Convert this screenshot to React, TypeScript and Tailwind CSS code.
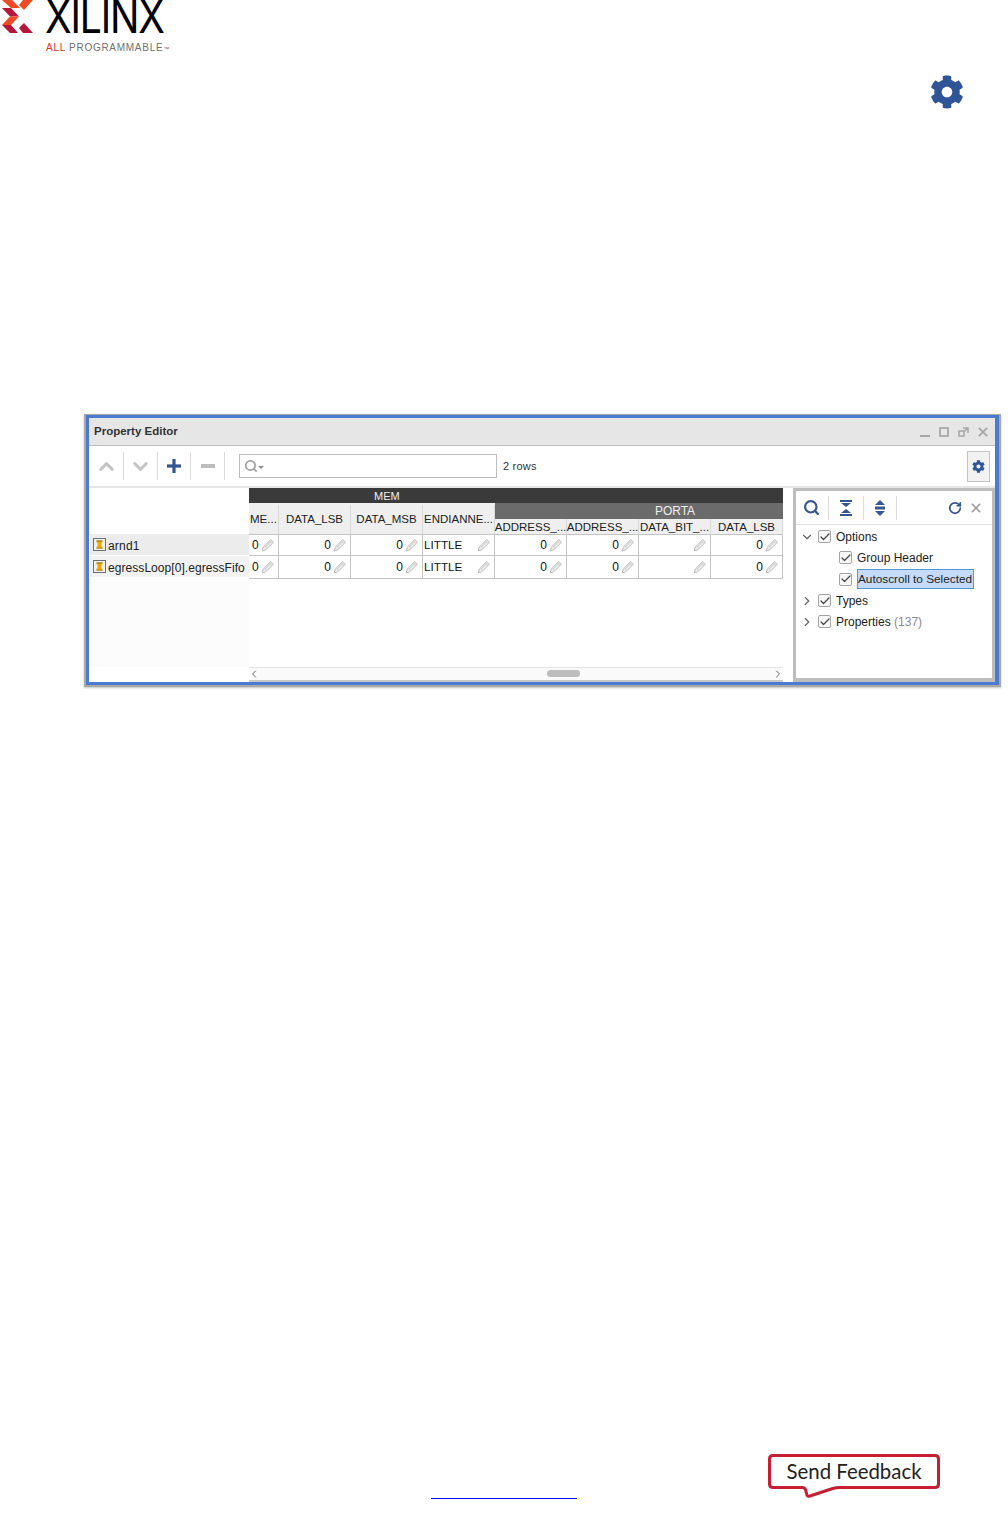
import { ChevronUp, ChevronDown, ChevronRight, ChevronLeft, Plus, Minus, Search, RotateCw, Check } from "lucide-react";
import { FaCog } from "react-icons/fa";

function Pencil() {
  return (
    <svg width="14" height="14" viewBox="0 0 14 14" className="shrink-0">
      <path d="M1.2 12.8 L2.2 9.2 L9.8 1.6 L12.4 4.2 L4.8 11.8 Z" fill="#f0f0f0" stroke="#b9b9b9" strokeWidth="1" />
      <path d="M3.4 8.2 L6 10.6 M8.6 2.8 L11.2 5.4 M4.4 9 L9.6 3.8" stroke="#cccccc" strokeWidth="1" fill="none" />
    </svg>
  );
}

function RowIcon() {
  return (
    <svg width="13" height="13" viewBox="0 0 13 13" className="shrink-0">
      <rect x="0.5" y="0.5" width="12" height="12" fill="#f0f0f0" stroke="#6f6f6f" />
      <path d="M3.5 2.5 H9.5 V4.5 H8.5 V8.5 H9.5 V10.5 H3.5 V8.5 H4.5 V4.5 H3.5 Z" fill="#eba90a" />
      <path d="M3.5 2.5 H9.5 V3.5 H3.5 Z M3.5 9.7 H9.5 V10.5 H3.5 Z" fill="#8f7420" />
    </svg>
  );
}

function CloseGlyph({ size, color, w }: { size: number; color: string; w: number }) {
  return (
    <svg width={size} height={size} viewBox="0 0 10 10" className="shrink-0">
      <path d="M0.8 0.8 L9.2 9.2 M9.2 0.8 L0.8 9.2" stroke={color} strokeWidth={w} fill="none" />
    </svg>
  );
}

function Box() {
  return (
    <span className="w-[13px] h-[13px] rounded-[2px] border border-[#a4a4a4] bg-[#f8f8f8] flex items-center justify-center shrink-0">
      <Check size={12} strokeWidth={2.4} color="#444444" className="shrink-0" />
    </span>
  );
}

function Cell({ v, left }: { v?: string; left?: boolean }) {
  return (
    <div className="flex items-center justify-end pr-[3px] border-r border-[#c4c4c4] min-w-0">
      {left ? (
        <span className="mr-auto pl-[1px] text-[11.7px] text-[#111111]">{v}</span>
      ) : (
        <span className="text-[12px] text-[#111111] mr-[2px]">{v}</span>
      )}
      <Pencil />
    </div>
  );
}

function Row({ h }: { h: string }) {
  return (
    <div className={`grid grid-cols-[30px_repeat(7,72px)] border-b border-[#c4c4c4] ${h}`}>
      <div className="flex items-center justify-between pl-[3px] pr-[3px] border-r border-[#c4c4c4]">
        <span className="text-[12px] text-[#111111]">0</span>
        <Pencil />
      </div>
      <Cell v="0" />
      <Cell v="0" />
      <Cell v="LITTLE" left />
      <Cell v="0" />
      <Cell v="0" />
      <Cell v="" />
      <Cell v="0" />
    </div>
  );
}

function HeadCell({ t }: { t: string }) {
  return (
    <div className="flex items-center justify-center border-r border-[#d8d8d8] whitespace-nowrap text-[11.5px] text-[#222222]">
      {t}
    </div>
  );
}

function Sep() {
  return <span className="w-px h-[24px] bg-[#dcdcdc] shrink-0" />;
}

function TreeRow({ children, indent }: { children: React.ReactNode; indent: string }) {
  return <div className={`flex items-center h-[21.3px] text-[12px] text-[#222222] ${indent}`}>{children}</div>;
}

export default function App() {
  return (
    <div className="w-[1008px] h-[1526px] bg-white flex flex-col overflow-hidden font-['Liberation_Sans',Arial,sans-serif]">
      {/* Logo */}
      <div className="flex h-[52px] shrink-0 pl-[1px]">
        <svg width="33" height="34" viewBox="0 0 33 34" className="shrink-0">
          <polygon points="1,0 11,0 19,8 10,8 " fill="#ee4a23" />
          <polygon points="1,8 10,8 18,16.5 9,16.5" fill="#b5173a" />
          <polygon points="9,16.5 18,16.5 10,25 1,25" fill="#ee4a23" />
          <polygon points="1,25 10,25 17,33 9,33 6,30" fill="#b5173a" />
          <polygon points="22,0 32,0 23,10 18,5" fill="#ee4a23" />
          <polygon points="18,28 23,23 32,33 22,33" fill="#b5173a" />
        </svg>
        <div className="ml-[11px] flex flex-col">
          <span className="font-['Inter'] font-normal text-[46px] leading-[33px] h-[33px] text-black tracking-[-1.4px] origin-left scale-x-[0.85]">XILINX</span>
          <span className="mt-[10px] ml-[1px] text-[10px] leading-[10px] tracking-[0.72px] text-[#6f6f6f] whitespace-nowrap">
            <span className="text-[#e0301e]">ALL</span> PROGRAMMABLE<span className="text-[6px]">™</span>
          </span>
        </div>
      </div>

      {/* Gear */}
      <div className="mt-[23px] pl-[930px] h-[33px] shrink-0">
        <FaCog size={34} color="#2f5597" />
      </div>

      {/* Property Editor window */}
      <div className="mt-[306px] ml-[84px] w-[917px] h-[273px] shrink-0 border border-[#a8a8a8] border-l-2 border-b-2 border-r-2 bg-white shadow-[0_1px_2px_rgba(0,0,0,0.25)]">
        <div className="h-full border-[3px] border-r-4 border-[#4a7bd0] flex flex-col">
          {/* Title */}
          <div className="h-[28px] shrink-0 bg-[#e6e6e6] border-b border-[#bdbdbd] flex items-center pl-[5px]">
            <span className="text-[11.5px] font-bold text-[#333333]">Property Editor</span>
            <div className="ml-auto flex items-center pr-[7px] gap-[9px]">
              <svg width="10" height="10" viewBox="0 0 10 10"><rect x="0" y="8" width="10" height="2" fill="#a6a6a6" /></svg>
              <svg width="10" height="10" viewBox="0 0 10 10"><rect x="1" y="1" width="8" height="8" fill="none" stroke="#a6a6a6" strokeWidth="1.6" /></svg>
              <svg width="11" height="10" viewBox="0 0 11 10"><path d="M1 4 V9 H6 V4 Z M5 1 H10 V6 M9.5 1.5 L5.5 5" fill="none" stroke="#a6a6a6" strokeWidth="1.5" /></svg>
              <CloseGlyph size={10} color="#a6a6a6" w={1.8} />
            </div>
          </div>

          {/* Toolbar */}
          <div className="h-[40px] shrink-0 flex items-center pl-[1px]">
            <div className="w-[34px] h-[28px] border-r border-[#dcdcdc] flex items-center justify-center"><ChevronUp size={23} strokeWidth={3} color="#c4c4c4" /></div>
            <div className="w-[34px] h-[28px] border-r border-[#dcdcdc] flex items-center justify-center"><ChevronDown size={23} strokeWidth={3} color="#c4c4c4" /></div>
            <div className="w-[33px] h-[28px] border-r border-[#dcdcdc] flex items-center justify-center"><Plus size={24} strokeWidth={3.2} strokeLinecap="butt" color="#34568f" /></div>
            <div className="w-[34px] h-[28px] border-r border-[#dcdcdc] flex items-center justify-center"><Minus size={24} strokeWidth={4} strokeLinecap="butt" color="#bdbdbd" /></div>
            <div className="ml-[14px] w-[258px] h-[24px] border border-[#bdbdbd] flex items-center pl-[4px]">
              <Search size={14} strokeWidth={3} color="#a0a0a0" />
              <span className="w-0 h-0 mt-[2px] border-x-[3px] border-x-transparent border-t-[3px] border-t-[#8a8a8a]" />
            </div>
            <span className="ml-[6px] text-[11px] text-[#333333] tracking-[0.2px]">2 rows</span>
            <div className="ml-auto mr-[5px] w-[23px] h-[31px] border border-[#c4c4c4] bg-[#f2f2f2] flex items-center justify-center">
              <FaCog size={13} color="#2f5597" />
            </div>
          </div>

          {/* Body */}
          <div className="flex-1 min-h-0 border-t-2 border-[#e6e6e6] flex">
            <div className="w-[160px] shrink-0 flex flex-col pl-[1px]">
              <div className="h-[46px] shrink-0 bg-white" />
              <div className="h-[21px] shrink-0 bg-[#ececec] flex items-center gap-[2px] pl-[3px] text-[12px] text-[#222222] tracking-[0.2px] whitespace-nowrap">
                <RowIcon />
                <span className="pt-[2px]">arnd1</span>
              </div>
              <div className="mt-[1px] h-[21px] shrink-0 bg-[#f2f2f2] flex items-center gap-[2px] pl-[3px] text-[12px] text-[#222222] tracking-[0.06px] whitespace-nowrap overflow-hidden">
                <RowIcon />
                <span className="pt-[2px]">egressLoop[0].egressFifo</span>
              </div>
              <div className="h-[90px] shrink-0 bg-[#fcfcfc]" />
            </div>

            <div className="w-[534px] shrink-0 flex flex-col">
              <div className="h-[15px] shrink-0 bg-[#3a3a3a] text-[#eeeeee] text-[11px] leading-[16px] pl-[125px]">MEM</div>
              <div className="h-[32px] shrink-0 flex border-b border-[#c4c4c4]">
                <div className="w-[246px] grid grid-cols-[30px_repeat(3,72px)] bg-[#efefef] pt-[2px]">
                  <div className="flex items-center overflow-hidden whitespace-nowrap border-r border-[#d8d8d8] text-[11.5px] text-[#222222] pl-[1px]">ME...</div>
                  <HeadCell t="DATA_LSB" />
                  <HeadCell t="DATA_MSB" />
                  <HeadCell t="ENDIANNE..." />
                </div>
                <div className="w-[288px] flex flex-col">
                  <div className="h-[16px] bg-[#6b6b6b] text-[#eeeeee] text-[12px] leading-[17px] text-center pl-[72px]">PORTA</div>
                  <div className="h-[15px] bg-[#efefef] grid grid-cols-[repeat(4,72px)]">
                    <HeadCell t="ADDRESS_..." />
                    <HeadCell t="ADDRESS_..." />
                    <HeadCell t="DATA_BIT_..." />
                    <HeadCell t="DATA_LSB" />
                  </div>
                </div>
              </div>
              <Row h="h-[21px]" />
              <Row h="h-[23px]" />
              <div className="flex-1" />
              <div className="h-[13px] shrink-0 bg-[#fafafa] border-t border-[#e4e4e4] flex items-center">
                <ChevronLeft size={12} strokeWidth={2} color="#666666" className="-ml-[1px] shrink-0" />
                <div className="ml-[287px] mb-[1px] w-[33px] h-[7px] rounded-[4px] bg-[#bcbcbc]" />
                <ChevronRight size={12} strokeWidth={2} color="#666666" className="ml-auto -mr-[1px] shrink-0" />
              </div>
              <div className="h-[2px] shrink-0 bg-[#c8c8c8]" />
            </div>

            {/* Filter panel */}
            <div className="ml-[10px] flex-1 min-w-0 border-[3px] border-b-4 border-[#bdbdbd] bg-white flex flex-col">
              <div className="h-[34px] shrink-0 border-b border-[#e4e4e4] flex items-center pl-[7px] pr-[11px]">
                <Search size={17} strokeWidth={3} color="#34568f" className="shrink-0" />
                <span className="w-[8px]" />
                <Sep />
                <svg width="14" height="16" viewBox="0 0 14 16" className="mx-[10px] shrink-0" fill="#34568f">
                  <rect x="1" y="0" width="12" height="2" />
                  <polygon points="2,3 12,3 7,7" />
                  <polygon points="2,13 12,13 7,9" />
                  <rect x="1" y="14" width="12" height="2" />
                </svg>
                <Sep />
                <svg width="12" height="16" viewBox="0 0 12 16" className="mx-[10px] shrink-0" fill="#34568f">
                  <polygon points="6,0 11,5 1,5" />
                  <rect x="1" y="6.5" width="10" height="3" />
                  <polygon points="6,16 11,11 1,11" />
                </svg>
                <Sep />
                <RotateCw size={14} strokeWidth={3} color="#34568f" className="ml-auto shrink-0" />
                <span className="ml-[9px]"><CloseGlyph size={10} color="#9c9c9c" w={1.6} /></span>
              </div>
              <div className="pt-[1px]">
                <TreeRow indent="pl-[4px]">
                  <ChevronDown size={14} strokeWidth={2} color="#666666" className="mr-[4px] shrink-0" />
                  <Box />
                  <span className="ml-[5px]">Options</span>
                </TreeRow>
                <TreeRow indent="pl-[43px]">
                  <Box />
                  <span className="ml-[5px]">Group Header</span>
                </TreeRow>
                <TreeRow indent="pl-[43px]">
                  <Box />
                  <span className="ml-[5px] h-[20px] leading-[18px] w-[117px] bg-[#c5daf8] border border-[#4f9ad6] whitespace-nowrap text-[11.8px]">Autoscroll to Selected</span>
                </TreeRow>
                <TreeRow indent="pl-[4px]">
                  <ChevronRight size={14} strokeWidth={2} color="#666666" className="mr-[4px] shrink-0" />
                  <Box />
                  <span className="ml-[5px]">Types</span>
                </TreeRow>
                <TreeRow indent="pl-[4px]">
                  <ChevronRight size={14} strokeWidth={2} color="#666666" className="mr-[4px] shrink-0" />
                  <Box />
                  <span className="ml-[5px]">Properties <span className="text-[#8c8c8c]">(137)</span></span>
                </TreeRow>
              </div>
            </div>
          </div>
        </div>
      </div>

      {/* Footer */}
      <div className="mt-[767px] pl-[431px] h-[46px] shrink-0 flex">
        <div className="w-[146px] h-[45px] border-b border-[#0000ff]" />
        <div className="ml-[191px] relative w-[172px] h-[45px] flex items-start justify-center">
          <svg width="172" height="45" viewBox="0 0 172 45" className="absolute inset-0">
            <path d="M5 1.5 H167 Q170.5 1.5 170.5 5 V30 Q170.5 33.5 167 33.5 H72 Q68 33.5 64 34.8 L42 42 Q39.5 42.8 38.8 40.5 L37.6 36 Q37 33.5 34 33.5 H5 Q1.5 33.5 1.5 30 V5 Q1.5 1.5 5 1.5 Z" fill="white" stroke="#c41f33" strokeWidth="3" />
          </svg>
          <span className="relative mt-[4px] font-['Lato'] text-[20.4px] leading-[26px] text-[#222222]">Send Feedback</span>
        </div>
      </div>
    </div>
  );
}
